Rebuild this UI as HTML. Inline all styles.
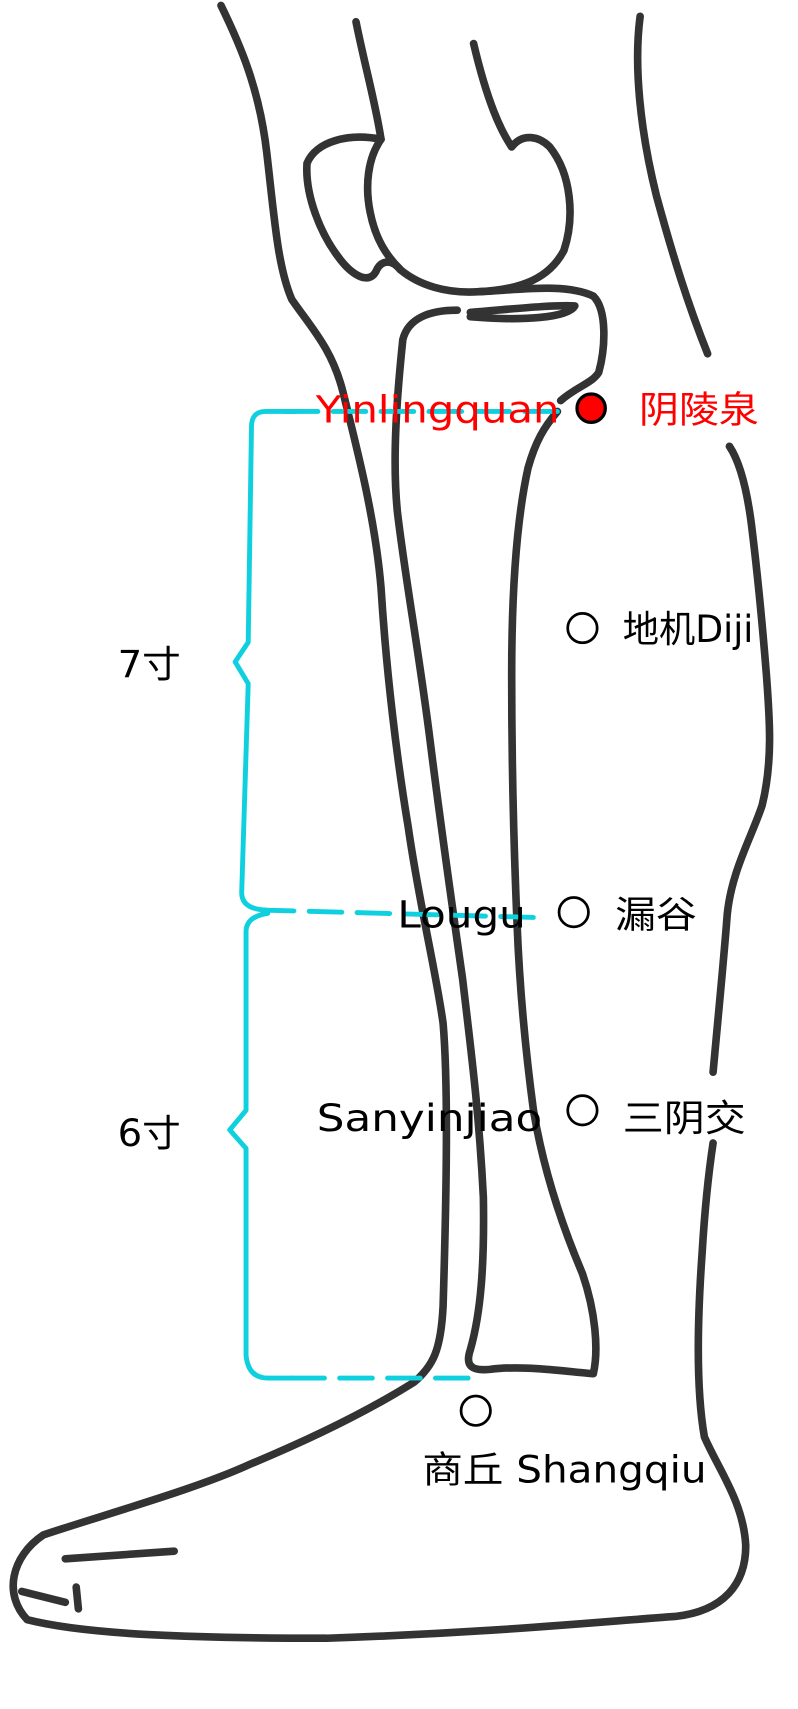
<!DOCTYPE html>
<html><head><meta charset="utf-8"><style>
html,body{margin:0;padding:0;background:#fff;}
svg{display:block;}
text{font-family:"DejaVu Sans","Noto Sans CJK SC",sans-serif;font-size:34px;}
</style></head><body>
<svg width="798" height="1709" viewBox="0 0 733 1570" preserveAspectRatio="none" xmlns="http://www.w3.org/2000/svg">
<g fill="none" stroke="#333" stroke-width="7" stroke-linecap="round" stroke-linejoin="round">
<path d="M203,5 C220,40 238,80 245,140 C252,200 255,245 268,275 C285,300 305,320 315,360 C330,420 345,480 350,540 C355,620 365,700 375,760 C385,830 400,890 407,940 C412,1000 410,1100 407,1200 C405,1240 398,1255 380,1270 C340,1295 290,1320 230,1345 C180,1368 100,1390 40,1410 C10,1430 3,1465 25,1488 C80,1502 180,1505 300,1505 C450,1500 550,1490 620,1485 C665,1480 685,1455 685,1420 C683,1380 660,1350 647,1320 C640,1280 640,1220 645,1150 C648,1100 652,1070 655,1050"/>
<path d="M655,985 C660,930 665,880 668,840 C672,800 690,770 700,740 C710,700 707,660 704,620 C700,570 695,520 690,480 C686,450 680,425 670,410"/>
<path d="M588,15 C582,60 588,120 603,180 C618,235 632,280 650,325"/>
<path d="M327,20 C335,60 345,95 350,128 C320,122 290,130 282,150 C280,180 295,215 310,235 C322,252 338,262 345,250 C350,238 360,238 368,248 C385,262 410,270 440,268 C480,266 505,255 518,230 C528,200 525,160 505,135 C495,125 480,122 470,135 C460,120 448,95 435,40"/>
<path d="M350,128 C338,145 335,170 340,195 C345,220 355,235 368,248"/>
<path d="M440,268 C480,266 520,260 545,272 C558,285 556,320 550,342 C544,352 530,355 515,368"/>
<path d="M432,287 C470,284 505,280 528,281 C522,292 480,295 432,291"/>
<path d="M420,285 C395,285 375,292 370,312 C365,360 360,420 365,470 C372,530 385,600 395,680 C405,760 415,830 425,900 C432,960 440,1020 444,1100 C445,1160 442,1205 432,1240 C428,1252 430,1260 450,1258 C480,1254 520,1260 545,1262 C550,1240 547,1205 535,1170 C518,1130 500,1080 490,1020 C482,960 477,900 475,850 C472,780 470,700 470,620 C470,550 474,480 485,430 C492,405 500,392 512,378"/>
<path d="M20,1462 L60,1472 M70,1458 L72,1478 M60,1432 L160,1425"/>
</g>
<g fill="none" stroke="#0ed0de" stroke-width="4.5" stroke-linecap="round" stroke-linejoin="round">
<path d="M272,378 L244,378 Q231,378 231,392 L228,590 L216,608 L228,628 L222,820 Q222,835 244,836"/>
<path d="M246,839 Q226,842 226,856 L226,1020 L211,1038 L226,1055 L226,1245 Q228,1266 246,1266 L268,1266"/>
<path d="M262,378 L515,378 M240,836 L497,843 M268,1266 L440,1266" stroke-dasharray="30,14"/>
</g>
<g lengthAdjust="spacingAndGlyphs">
<text x="290" y="388" fill="#f00" textLength="224" lengthAdjust="spacingAndGlyphs">Yinlingquan</text>
<text x="587" y="388" fill="#f00" textLength="110" lengthAdjust="spacingAndGlyphs">阴陵泉</text>
<text x="572" y="590" fill="#000" textLength="120" lengthAdjust="spacingAndGlyphs">地机Diji</text>
<text x="365" y="852" fill="#000" textLength="118" lengthAdjust="spacingAndGlyphs">Lougu</text>
<text x="565" y="852" fill="#000" textLength="75" lengthAdjust="spacingAndGlyphs">漏谷</text>
<text x="291" y="1039" fill="#000" textLength="207" lengthAdjust="spacingAndGlyphs">Sanyinjiao</text>
<text x="572" y="1039" fill="#000" textLength="113" lengthAdjust="spacingAndGlyphs">三阴交</text>
<text x="388" y="1362" fill="#000" textLength="261" lengthAdjust="spacingAndGlyphs">商丘 Shangqiu</text>
<text x="108" y="622" fill="#000" textLength="58" lengthAdjust="spacingAndGlyphs">7寸</text>
<text x="108" y="1053" fill="#000" textLength="58" lengthAdjust="spacingAndGlyphs">6寸</text>
</g>
<circle cx="543" cy="375" r="13" fill="#f00" stroke="#000" stroke-width="3"/>
<g fill="none" stroke="#000" stroke-width="2.5">
<circle cx="535" cy="577" r="13.5"/>
<circle cx="527" cy="838" r="13.5"/>
<circle cx="535" cy="1020" r="13.5"/>
<circle cx="437" cy="1296" r="13.5"/>
</g>
</svg>
</body></html>
